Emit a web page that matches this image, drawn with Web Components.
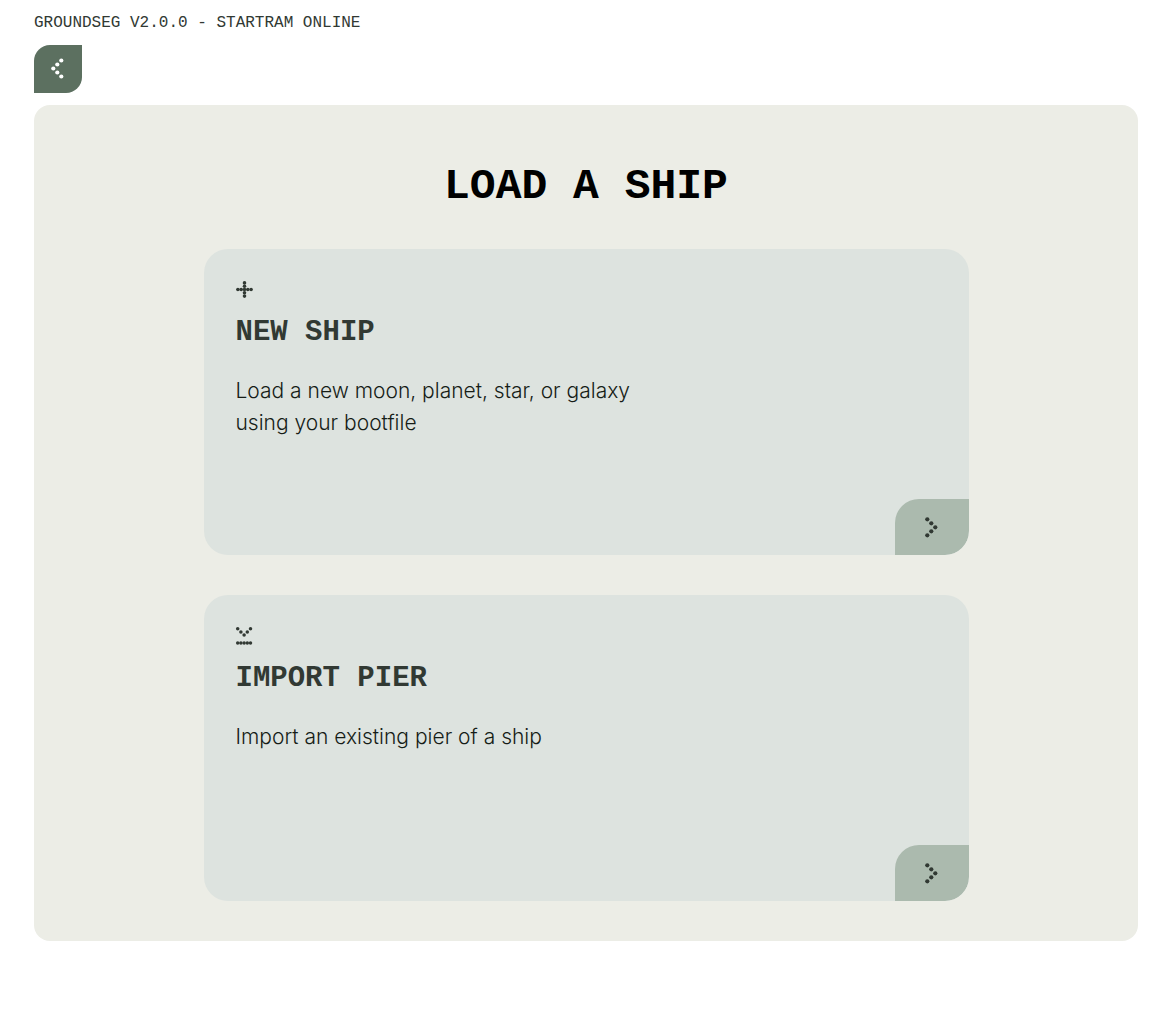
<!DOCTYPE html>
<html lang="en">
<head>
<meta charset="utf-8">
<meta name="viewport" content="width=device-width, initial-scale=1">
<title>GroundSeg - Load a ship</title>
<style>
body { margin: 0; background: #fff; color: #161d17; font-family: Inter, "Liberation Sans", sans-serif; }
</style>
</head>
<body>
<gs-app></gs-app>
<script>
const dots = (w, h, r, points) =>
  `<svg width="${w}" height="${h}" viewBox="0 0 ${w} ${h}" fill="currentColor" aria-hidden="true">${
    points.map(([x, y]) => `<circle cx="${x}" cy="${y}" r="${r}"/>`).join('')}</svg>`;

const ICONS = {
  back: dots(14, 20, 2.1, [[10.3, 1.5], [6.3, 5.5], [2.3, 9.5], [6.3, 13.5], [10.3, 17.5]]),
  next: dots(14, 20, 2.1, [[2.3, 2.3], [6.3, 6.3], [10.3, 10.3], [6.3, 14.3], [2.3, 18.3]]),
  plus: dots(17, 18, 1.8, [[1.9, 8.5], [5.2, 8.5], [8.5, 8.5], [11.8, 8.5], [15.1, 8.5],
    [8.5, 1.9], [8.5, 5.2], [8.5, 11.8], [8.5, 15.1]]),
  import: dots(17, 18, 1.75, [[1.7, 1.7], [4.9, 4.9], [8.1, 8.1], [11.3, 4.9], [14.5, 1.7],
    [1.7, 16], [4.9, 16], [8.1, 16], [11.3, 16], [14.5, 16]])
};

class GsIcon extends HTMLElement {
  connectedCallback() {
    this.attachShadow({ mode: 'open' }).innerHTML = `
      <style>:host { display: block; } svg { display: block; overflow: visible; }</style>
      ${ICONS[this.getAttribute('name')]}`;
  }
}
customElements.define('gs-icon', GsIcon);

class GsHeader extends HTMLElement {
  connectedCallback() {
    this.attachShadow({ mode: 'open' }).innerHTML = `
      <style>
        :host { display: flex; flex-direction: column; align-items: flex-start; gap: 12px; padding-top: 13px; }
        p { margin: 0; font: 16px/20px "Liberation Mono", monospace; color: #313933; text-transform: uppercase; }
        button { display: grid; place-items: center; width: 48px; height: 48px; margin: 0; padding: 0;
          border: 0; border-radius: 16px 0; background: #5c7060; color: #fff; cursor: pointer; }
      </style>
      <p><slot></slot></p>
      <button type="button" aria-label="Back"><gs-icon name="back"></gs-icon></button>`;
  }
}
customElements.define('gs-header', GsHeader);

class GsPanel extends HTMLElement {
  connectedCallback() {
    this.attachShadow({ mode: 'open' }).innerHTML = `
      <style>
        :host { display: flex; flex-direction: column; align-items: center; gap: 38px;
          padding: 58px 40px 40px; border-radius: 16px; background: #ecede6; }
        h1 { margin: 0; font: bold 43px/48px "Liberation Mono", monospace; color: #000; text-transform: uppercase; }
        div { display: flex; flex-direction: column; gap: 40px; width: 100%; max-width: 765px; }
      </style>
      <h1><slot name="title"></slot></h1>
      <div><slot></slot></div>`;
  }
}
customElements.define('gs-panel', GsPanel);

class GsCard extends HTMLElement {
  connectedCallback() {
    this.attachShadow({ mode: 'open' }).innerHTML = `
      <style>
        :host { display: flex; flex-direction: column; min-height: 306px; border-radius: 24px;
          background: #dde3df; overflow: hidden; }
        .body { flex: 1; display: flex; flex-direction: column; align-items: flex-start; padding: 32px 32px 0; }
        h2 { margin: 18px 0 0; font: bold 29px/32px "Liberation Mono", monospace; color: #313933; text-transform: uppercase; }
        p { margin: 26px 0 0; max-width: 420px; font-size: 21px; line-height: 32px; font-weight: 300; }
        gs-icon { color: #313933; }
        button { align-self: flex-end; display: grid; place-items: center; width: 74px; height: 56px; margin: 0;
          padding: 0; border: 0; border-radius: 24px 0; background: #abbaae; color: #313933; cursor: pointer; }
      </style>
      <div class="body">
        <gs-icon name="${this.getAttribute('icon')}"></gs-icon>
        <h2><slot name="title"></slot></h2>
        <p><slot></slot></p>
      </div>
      <button type="button" aria-label="Continue"><gs-icon name="next"></gs-icon></button>`;
  }
}
customElements.define('gs-card', GsCard);

class GsApp extends HTMLElement {
  connectedCallback() {
    this.attachShadow({ mode: 'open' }).innerHTML = `
      <style>
        :host { display: block; padding: 0 38px 40px 34px; }
        main { display: flex; flex-direction: column; gap: 12px; }
      </style>
      <main>
        <gs-header>GROUNDSEG V2.0.0 - STARTRAM ONLINE</gs-header>
        <gs-panel>
          <span slot="title">LOAD A SHIP</span>
          <gs-card icon="plus"><span slot="title">NEW SHIP</span>Load a new moon, planet, star, or galaxy using your bootfile</gs-card>
          <gs-card icon="import"><span slot="title">IMPORT PIER</span>Import an existing pier of a ship</gs-card>
        </gs-panel>
      </main>`;
  }
}
customElements.define('gs-app', GsApp);
</script>
</body>
</html>
